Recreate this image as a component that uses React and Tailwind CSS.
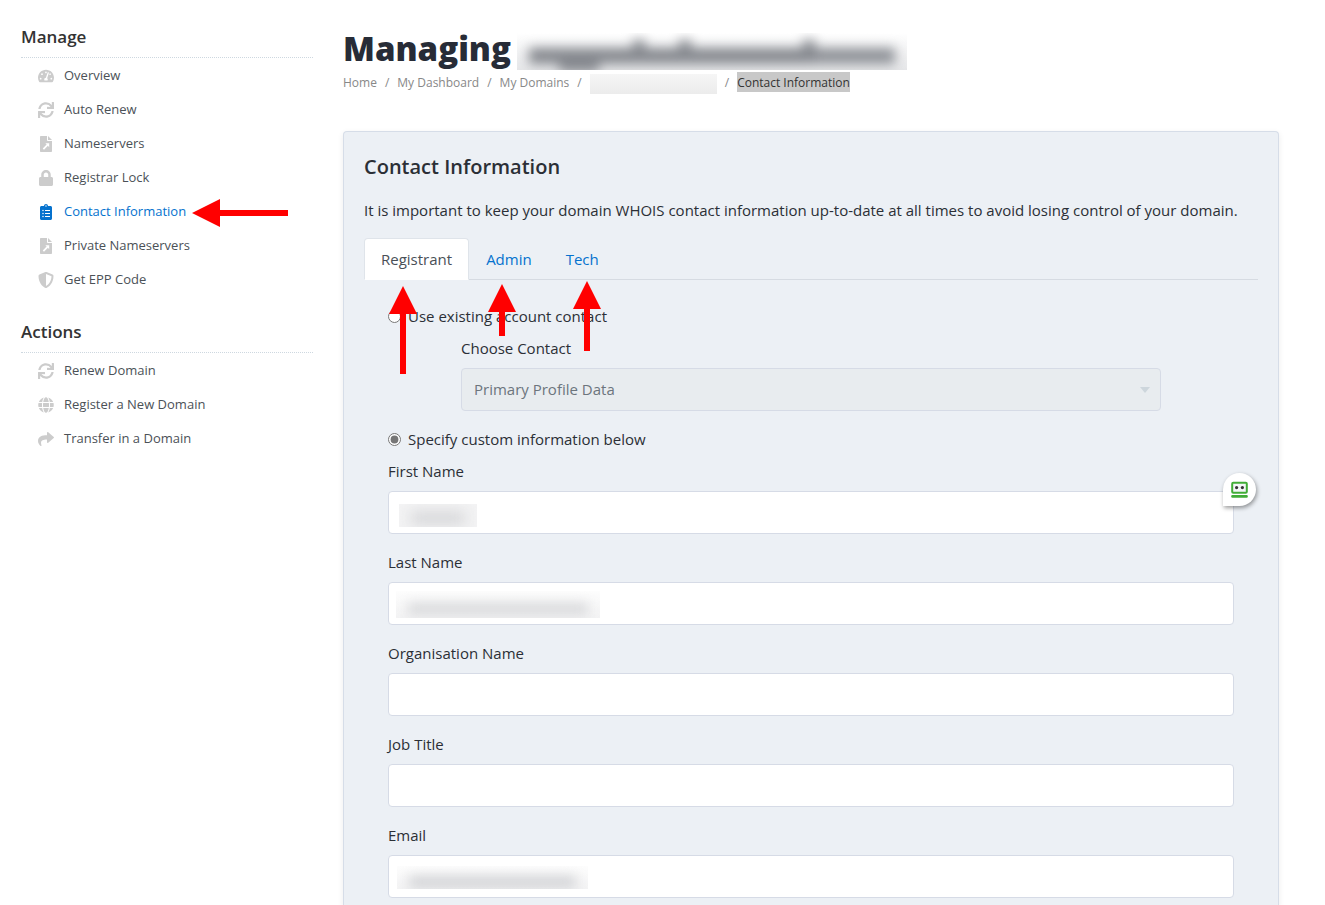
import React, { useState } from 'react';
import {
  FaTachometerAlt,
  FaSync,
  FaLock,
  FaClipboardList,
  FaShieldAlt,
  FaGlobe,
  FaShare
} from 'react-icons/fa';

const FileArrowIcon = ({ className }) => (
  <svg viewBox="0 0 384 512" fill="currentColor" className={className} aria-hidden="true">
    <path
      fillRule="evenodd"
      d="M24 0h200v136c0 13 11 24 24 24h136v328c0 13-11 24-24 24H24c-13 0-24-11-24-24V24C0 11 11 0 24 0zM170 232l42 42-124 124 40 40 124-124 42 42V232z"
    />
    <path d="M256 0l128 128H256z" />
  </svg>
);

const manageLinks = [
  { label: 'Overview', icon: FaTachometerAlt },
  { label: 'Auto Renew', icon: FaSync },
  { label: 'Nameservers', icon: FileArrowIcon },
  { label: 'Registrar Lock', icon: FaLock },
  { label: 'Contact Information', icon: FaClipboardList, active: true },
  { label: 'Private Nameservers', icon: FileArrowIcon },
  { label: 'Get EPP Code', icon: FaShieldAlt }
];

const actionLinks = [
  { label: 'Renew Domain', icon: FaSync },
  { label: 'Register a New Domain', icon: FaGlobe },
  { label: 'Transfer in a Domain', icon: FaShare }
];

const tabs = [
  { label: 'Registrant', arrow: 88, arrowClass: 'left-[25px] top-[48px]' },
  { label: 'Admin', arrow: 52, arrowClass: 'left-[19px] top-[46px]' },
  { label: 'Tech', arrow: 70, arrowClass: 'left-[24px] top-[43px]' }
];

const UpArrow = ({ length, className }) => (
  <svg width="28" height={length} className={`absolute z-10 pointer-events-none ${className}`} aria-hidden="true">
    <path d={`M14 0L28 28H17V${length}H11V28H0z`} fill="#ff0000" />
  </svg>
);

const NavSection = ({ title, links, className }) => (
  <section className={className}>
    <h2 className="text-[17px] leading-[26px] font-semibold text-[#333] pb-[7px] border-b border-dotted border-[#ced8e0]">{title}</h2>
    <ul className="pt-px">
      {links.map(({ label, icon: Icon, active }) => (
        <li key={label} className="flex">
          <a
            href="#"
            className={`relative flex items-center h-[34px] pl-[17px] text-[13px] ${active ? 'text-[#0572ce]' : 'text-[#4b5157]'}`}
          >
            <span className={`w-4 mr-[10px] flex justify-center ${active ? '' : 'text-[#cccccc]'}`}>
              <Icon className="h-4 w-auto shrink-0" />
            </span>
            {label}
            {active && (
              <svg width="96" height="28" className="absolute left-full ml-1.5 top-1 pointer-events-none" aria-hidden="true">
                <path d="M0 14L28 0V11H96V17H28V28z" fill="#ff0000" />
              </svg>
            )}
          </a>
        </li>
      ))}
    </ul>
  </section>
);

const Field = ({ id, label, type = 'text', children }) => (
  <div className="mb-4">
    <label htmlFor={id} className="block leading-6 mb-2">{label}</label>
    <div className="relative">
      <input
        id={id}
        type={type}
        className="block w-full h-[43px] px-3 bg-white border border-[#d6dbe6] rounded"
      />
      {children}
    </div>
  </div>
);

const FormFillerBadge = () => (
  <button
    type="button"
    aria-label="Fill form"
    className="absolute -right-[22px] -top-[18px] w-[33px] h-[33px] flex items-center justify-center bg-white rounded-full rounded-bl-none shadow-[1px_2px_4px_rgba(0,0,0,0.4)]"
  >
    <svg width="17" height="17" viewBox="0 0 17 17" aria-hidden="true">
      <rect x="1.2" y="1.7" width="14.6" height="10" rx="1" fill="#f4f6f8" stroke="#41ad37" strokeWidth="2" />
      <circle cx="5.6" cy="6.6" r="1.6" fill="#333" />
      <circle cx="11.4" cy="6.6" r="1.6" fill="#333" />
      <rect x="0.2" y="14" width="16.6" height="2.8" rx="1.2" fill="#41ad37" />
    </svg>
  </button>
);

export default function App() {
  const [tab, setTab] = useState('Registrant');
  const [source, setSource] = useState('custom');

  return (
    <div className="min-h-screen flex gap-[30px] pl-[21px] pr-[46px] bg-white font-['Open_Sans',sans-serif] text-[15px] text-[#2b2f36] overflow-x-hidden">
      <aside className="w-[292px] shrink-0 pt-6">
        <NavSection title="Manage" links={manageLinks} />
        <NavSection title="Actions" links={actionLinks} className="mt-[22px]" />
      </aside>

      <main className="flex-1 min-w-0 flex flex-col pt-[26px]">
        <div className="flex items-end">
          <h1 className="text-[33px] leading-[46px] font-extrabold text-[#272c37]">Managing</h1>
          <div className="ml-1.5 mb-0.5 w-[390px] h-[37px] overflow-hidden bg-linear-to-b from-white to-[#e6e7e9]" aria-hidden="true">
            <div className="h-full pt-[15px] px-3 flex items-start blur-[6px]">
              <div className="w-[30px] h-4 bg-[#85888e]" />
              <div className="w-[40px] h-6 bg-[#85888e]" />
              <div className="w-[34px] h-4 bg-[#85888e]" />
              <div className="w-[12px] h-6 -mt-2 bg-[#85888e]" />
              <div className="w-[34px] h-4 bg-[#85888e]" />
              <div className="w-[12px] h-6 -mt-2 bg-[#85888e]" />
              <div className="w-[112px] h-4 bg-[#85888e]" />
              <div className="w-[12px] h-6 -mt-2 bg-[#85888e]" />
              <div className="w-[80px] h-4 bg-[#8e9197]" />
            </div>
          </div>
        </div>

        <nav aria-label="Breadcrumb" className="mb-[37px]">
          <ol className="flex items-center h-[22px] text-[12px] text-[#888]">
            <li><a href="#">Home</a></li>
            <li className="px-2">/</li>
            <li><a href="#">My Dashboard</a></li>
            <li className="px-2">/</li>
            <li><a href="#">My Domains</a></li>
            <li className="px-2">/</li>
            <li className="w-[127px] h-5 mt-0.5 bg-linear-to-b from-[#f6f6f6] to-[#ececec]" aria-hidden="true" />
            <li className="px-2">/</li>
            <li className="self-start h-5 leading-[22px] bg-[#c8c8c8] text-[#333]">Contact Information</li>
          </ol>
        </nav>

        <div className="flex-1 px-5 pt-5 border border-b-0 border-[#d6dde8] rounded-t bg-[#ecf0f5] shadow-[0_2px_6px_rgba(0,0,0,0.08)]">
          <h2 className="text-[20px] leading-[30px] font-semibold mb-4">Contact Information</h2>
          <p className="leading-6 mb-4">
            It is important to keep your domain WHOIS contact information up-to-date at all times to avoid losing control of your domain.
          </p>

          <div role="tablist" className="flex border-b border-[#d6dbe2]">
            {tabs.map(({ label, arrow, arrowClass }) => (
              <div key={label} className="relative -mb-px">
                <button
                  type="button"
                  role="tab"
                  aria-selected={tab === label}
                  onClick={() => setTab(label)}
                  className={`h-[42px] px-4 border rounded-t ${tab === label ? 'bg-white border-[#dfe4ea] border-b-white text-[#495057]' : 'border-transparent text-[#0572ce]'}`}
                >
                  {label}
                </button>
                <UpArrow length={arrow} className={arrowClass} />
              </div>
            ))}
          </div>

          <form className="px-6 pt-6">
            <label className="flex items-center h-6 mb-2">
              <input
                type="radio"
                name="source"
                checked={source === 'existing'}
                onChange={() => setSource('existing')}
                className="w-[13px] h-[13px] mr-[7px] accent-[#767676]"
              />
              Use existing account contact
            </label>
            <div className="mx-[73px] mb-4">
              <label htmlFor="contact" className="block leading-6 mb-2">Choose Contact</label>
              <div className="relative">
                <select
                  id="contact"
                  disabled={source !== 'existing'}
                  className="block w-full h-[43px] px-3 appearance-none border border-[#d6dbe6] rounded bg-[#e8ecef] text-[#6c757d] opacity-100"
                >
                  <option>Primary Profile Data</option>
                </select>
                <svg width="10" height="6" className="absolute right-[11px] top-[19px] pointer-events-none" aria-hidden="true">
                  <path d="M0 0H10L5 6z" fill="#cdd6dc" />
                </svg>
              </div>
            </div>
            <label className="flex items-center h-6 mb-2">
              <input
                type="radio"
                name="source"
                checked={source === 'custom'}
                onChange={() => setSource('custom')}
                className="w-[13px] h-[13px] mr-[7px] accent-[#767676]"
              />
              Specify custom information below
            </label>

            <Field id="firstName" label="First Name">
              <div className="absolute left-[11px] top-[13px] w-[78px] h-[23px] overflow-hidden bg-[#f3f3f4]" aria-hidden="true">
                <div className="mt-2 mx-3 h-3 bg-[#d3d4d6] blur-[7px]" />
              </div>
              <FormFillerBadge />
            </Field>
            <Field id="lastName" label="Last Name">
              <div className="absolute left-2 top-[9px] w-[204px] h-[27px] overflow-hidden bg-linear-to-b from-[#fdfdfd] to-[#f3f3f4]" aria-hidden="true">
                <div className="mt-3 mx-3 h-3 bg-[#d8d9db] blur-[6px]" />
              </div>
            </Field>
            <Field id="organisation" label="Organisation Name" />
            <Field id="jobTitle" label="Job Title" />
            <div className="-mb-2">
              <Field id="email" label="Email" type="email">
                <div className="absolute left-[9px] top-[11px] w-[191px] h-[23px] overflow-hidden bg-linear-to-b from-[#fdfdfd] to-[#f3f3f4]" aria-hidden="true">
                  <div className="mt-[10px] mx-3 h-3 bg-[#d2d3d6] blur-[6px]" />
                </div>
              </Field>
            </div>
          </form>
        </div>
      </main>
    </div>
  );
}
